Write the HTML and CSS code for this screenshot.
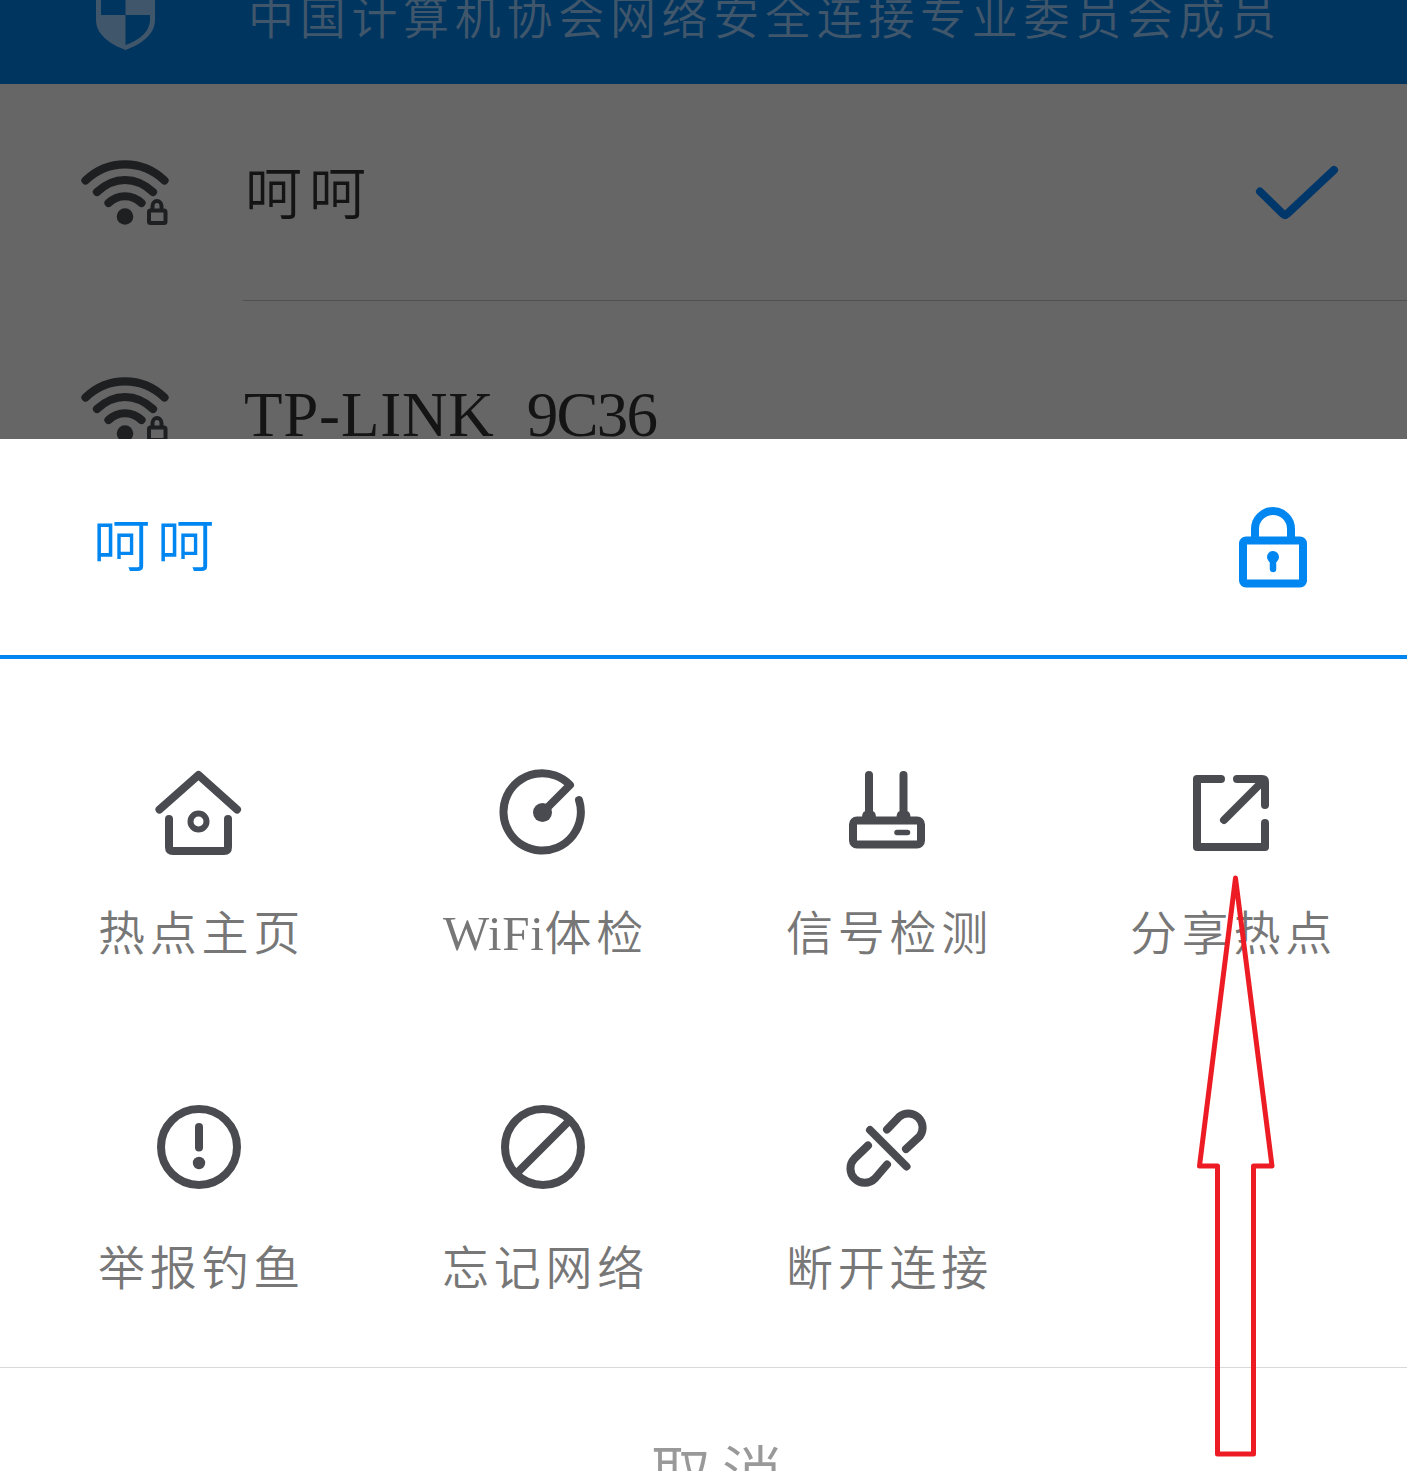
FILE: index.html
```html
<!DOCTYPE html>
<html lang="zh-CN">
<head>
<meta charset="utf-8">
<title>WiFi</title>
<link rel="stylesheet" href="styles.css">
</head>
<body>
<main class="screen">
  <header class="banner">
    <svg class="banner-icon" width="64" height="84" viewBox="0 0 64 84">
      <path d="M2 0H61V20C61 34 48 44 31.500 50C15 44 2 34 2 20Z" fill="#40566b"/>
      <path d="M7 0H31.500V15H7ZM31.500 15H56V20C56 31 46 40 31.500 45Z" fill="#00355f"/>
    </svg>
    <p class="banner-text">中国计算机协会网络安全连接专业委员会成员</p>
  </header>
  <section class="networks">
    <div class="network">
      <svg class="wifi" width="96" height="80" viewBox="0 0 96 80">
        <path d="M8.500 28.500C31 7 65 7 87.500 28.500M20 40C37 24 59 24 76 40M31.500 51C41 42 55 42 64.500 51" fill="none" stroke="#1d1f21" stroke-width="8.200" stroke-linecap="round"/>
        <circle cx="48" cy="64.500" r="8.300" fill="#1d1f21"/>
        <path d="M75.500 58V54A4.500 5 0 0 1 84.500 54V58" fill="none" stroke="#1d1f21" stroke-width="4"/>
        <rect x="72" y="58.500" width="16.500" height="12.500" rx="1.500" fill="none" stroke="#1d1f21" stroke-width="4"/>
      </svg>
      <div class="network-body">
        <span class="network-name">呵呵</span>
        <svg class="check" width="90" height="64" viewBox="0 0 90 64">
          <path d="M10 31.500L33 54Q35 56 37 54L84 10" fill="none" stroke="#00376a" stroke-width="8" stroke-linecap="round" stroke-linejoin="round"/>
        </svg>
      </div>
    </div>
    <div class="network">
      <svg class="wifi" width="96" height="80" viewBox="0 0 96 80">
        <path d="M8.500 28.500C31 7 65 7 87.500 28.500M20 40C37 24 59 24 76 40M31.500 51C41 42 55 42 64.500 51" fill="none" stroke="#1d1f21" stroke-width="8.200" stroke-linecap="round"/>
        <circle cx="48" cy="64.500" r="8.300" fill="#1d1f21"/>
        <path d="M75.500 58V54A4.500 5 0 0 1 84.500 54V58" fill="none" stroke="#1d1f21" stroke-width="4"/>
        <rect x="72" y="58.500" width="16.500" height="12.500" rx="1.500" fill="none" stroke="#1d1f21" stroke-width="4"/>
      </svg>
      <div class="network-body">
        <span class="network-name latin">TP-LINK_<span class="digits">9C36</span></span>
      </div>
    </div>
  </section>
  <section class="sheet">
    <div class="sheet-head">
      <h1 class="sheet-title">呵呵</h1>
      <svg width="76" height="90" viewBox="0 0 76 90">
        <path d="M20 36V27A18 18 0 0 1 56 27V36" fill="none" stroke="#0086f1" stroke-width="8"/>
        <rect x="8" y="38.500" width="60" height="43" rx="3" fill="none" stroke="#0086f1" stroke-width="8"/>
        <circle cx="38" cy="55" r="6" fill="#0086f1"/>
        <path d="M38 55V67" stroke="#0086f1" stroke-width="6.500" stroke-linecap="round"/>
      </svg>
    </div>
    <div class="actions">
      <div class="action">
        <svg class="icon" viewBox="0 0 120 120">
          <path d="M19.500 59.500L58.500 25L97 59.500M29 69V97Q29 101 33 101H84Q88 101 88 97V69"/>
          <circle class="ring" cx="58.500" cy="71.500" r="8"/>
        </svg>
        <span class="label">热点主页</span>
      </div>
      <div class="action">
        <svg class="icon" viewBox="0 0 120 120">
          <path d="M58.500 62.500L86 35A38.700 38.700 0 1 0 95 50"/>
          <circle class="solid" cx="58.500" cy="62.500" r="9.500"/>
        </svg>
        <span class="label"><span class="word">WiFi</span>体检</span>
      </div>
      <div class="action">
        <svg class="icon" viewBox="0 0 120 120">
          <path d="M41 25V66M75.500 25V66"/>
          <path class="solid" d="M34 68Q34 61 38 61H44Q48 61 48 68ZM68.500 68Q68.500 61 72.500 61H78.500Q82.500 61 82.500 68Z"/>
          <rect x="25" y="70.500" width="68" height="24" rx="4"/>
          <path class="thin" d="M69 82.500H79.500"/>
        </svg>
        <span class="label">信号检测</span>
      </div>
      <div class="action">
        <svg class="icon" viewBox="0 0 120 120">
          <path d="M49 29H25V97H93V73M65 29H90Q93 29 93 32V55M91 31L52 70"/>
        </svg>
        <span class="label">分享热点</span>
      </div>
      <div class="action">
        <svg class="icon" viewBox="0 0 120 120">
          <circle cx="59" cy="62" r="38"/>
          <path d="M59 42V62.500"/>
          <circle class="solid" cx="59" cy="78" r="6.200"/>
        </svg>
        <span class="label">举报钓鱼</span>
      </div>
      <div class="action">
        <svg class="icon" viewBox="0 0 120 120">
          <circle cx="59" cy="62" r="38"/>
          <path d="M34 87L84 37"/>
        </svg>
        <span class="label">忘记网络</span>
      </div>
      <div class="action">
        <svg class="icon" viewBox="0 0 120 120">
          <path d="M42 45L78.500 81.500M59 44.500L71.500 31.500A14.300 14.300 0 0 1 92 51L78 64M40 60.500L26.500 73.500A14.300 14.300 0 0 0 47 93.500L59 79.500"/>
        </svg>
        <span class="label">断开连接</span>
      </div>
    </div>
    <div class="cancel">取消</div>
  </section>
  <svg class="pointer" width="80" height="584" viewBox="0 0 80 584">
    <path d="M40.500 4L77 292H58.500V580H22.500V292H4.500Z"/>
  </svg>
</main>
</body>
</html>
```
FILE: styles.css
```css
* { box-sizing: border-box; }

body {
  margin: 0;
  background: #fff;
  font-family: "Liberation Serif", "Noto Sans CJK SC", serif;
  font-weight: 350;
}

svg { display: block; flex: none; }

.screen {
  position: relative;
  width: 1407px;
  height: 1471px;
  overflow: hidden;
}

.banner {
  display: flex;
  height: 84px;
  padding-left: 94px;
  background: #00355f;
}

.banner-text {
  margin: -13px 0 0 87px;
  font-size: 46px;
  line-height: 64px;
  letter-spacing: 5.7px;
  white-space: nowrap;
  padding-left: 3px;
  color: #40566b;
}

.networks {
  height: 355px;
  overflow: hidden;
  background: #666;
}

.network {
  display: flex;
  height: 217px;
  padding-left: 77px;
}

.wifi { margin-top: 68px; }

.network-body {
  display: flex;
  flex: 1;
  justify-content: space-between;
  margin-left: 70px;
  padding: 69px 67px 0 1px;
  border-bottom: 1px solid #505050;
}

.network-name {
  padding-left: 1px;
  font-size: 57px;
  line-height: 84px;
  letter-spacing: 7px;
  color: #141414;
}

.latin {
  padding: 3px 0 0;
  font-size: 63px;
  letter-spacing: 0.8px;
}

.digits { letter-spacing: -1.8px; }

.check { margin-top: 7px; }

.sheet { background: #fff; }

.sheet-head {
  display: flex;
  align-items: center;
  justify-content: space-between;
  height: 220px;
  padding: 0 96px 0 93px;
  border-bottom: 4px solid #0086f1;
}

.sheet-title {
  margin: 0;
  font-size: 57px;
  font-weight: 350;
  line-height: 80px;
  letter-spacing: 7px;
  color: #0086f1;
}

.actions {
  display: grid;
  grid-template-columns: repeat(4, 344px);
  row-gap: 122px;
  padding: 91px 0 69px 28px;
  border-bottom: 1px solid #d9d9d9;
}

.action {
  display: flex;
  flex-direction: column;
  align-items: center;
  gap: 33px;
}

.icon {
  width: 120px;
  height: 120px;
  fill: none;
  stroke: #4a4b50;
  stroke-width: 8;
  stroke-linecap: round;
  stroke-linejoin: round;
}

.icon .solid { fill: #4a4b50; stroke: none; }
.icon .thin { stroke-width: 5.5; }
.icon .ring { stroke-width: 6; }

.label {
  height: 60px;
  padding-left: 3px;
  font-size: 47px;
  line-height: 62px;
  letter-spacing: 4.8px;
  white-space: nowrap;
  color: #777;
}

.word {
  font-size: 49px;
  letter-spacing: 0.7px;
}

.cancel {
  padding: 68px 0 0 651px;
  font-size: 60px;
  line-height: 80px;
  letter-spacing: 11px;
  color: #999;
}

/* Callout arrow lying over the sheet */
.pointer {
  position: absolute;
  left: 1195px;
  top: 874px;
  fill: none;
  stroke: #ed1c24;
  stroke-width: 5;
  stroke-linejoin: round;
}
```
